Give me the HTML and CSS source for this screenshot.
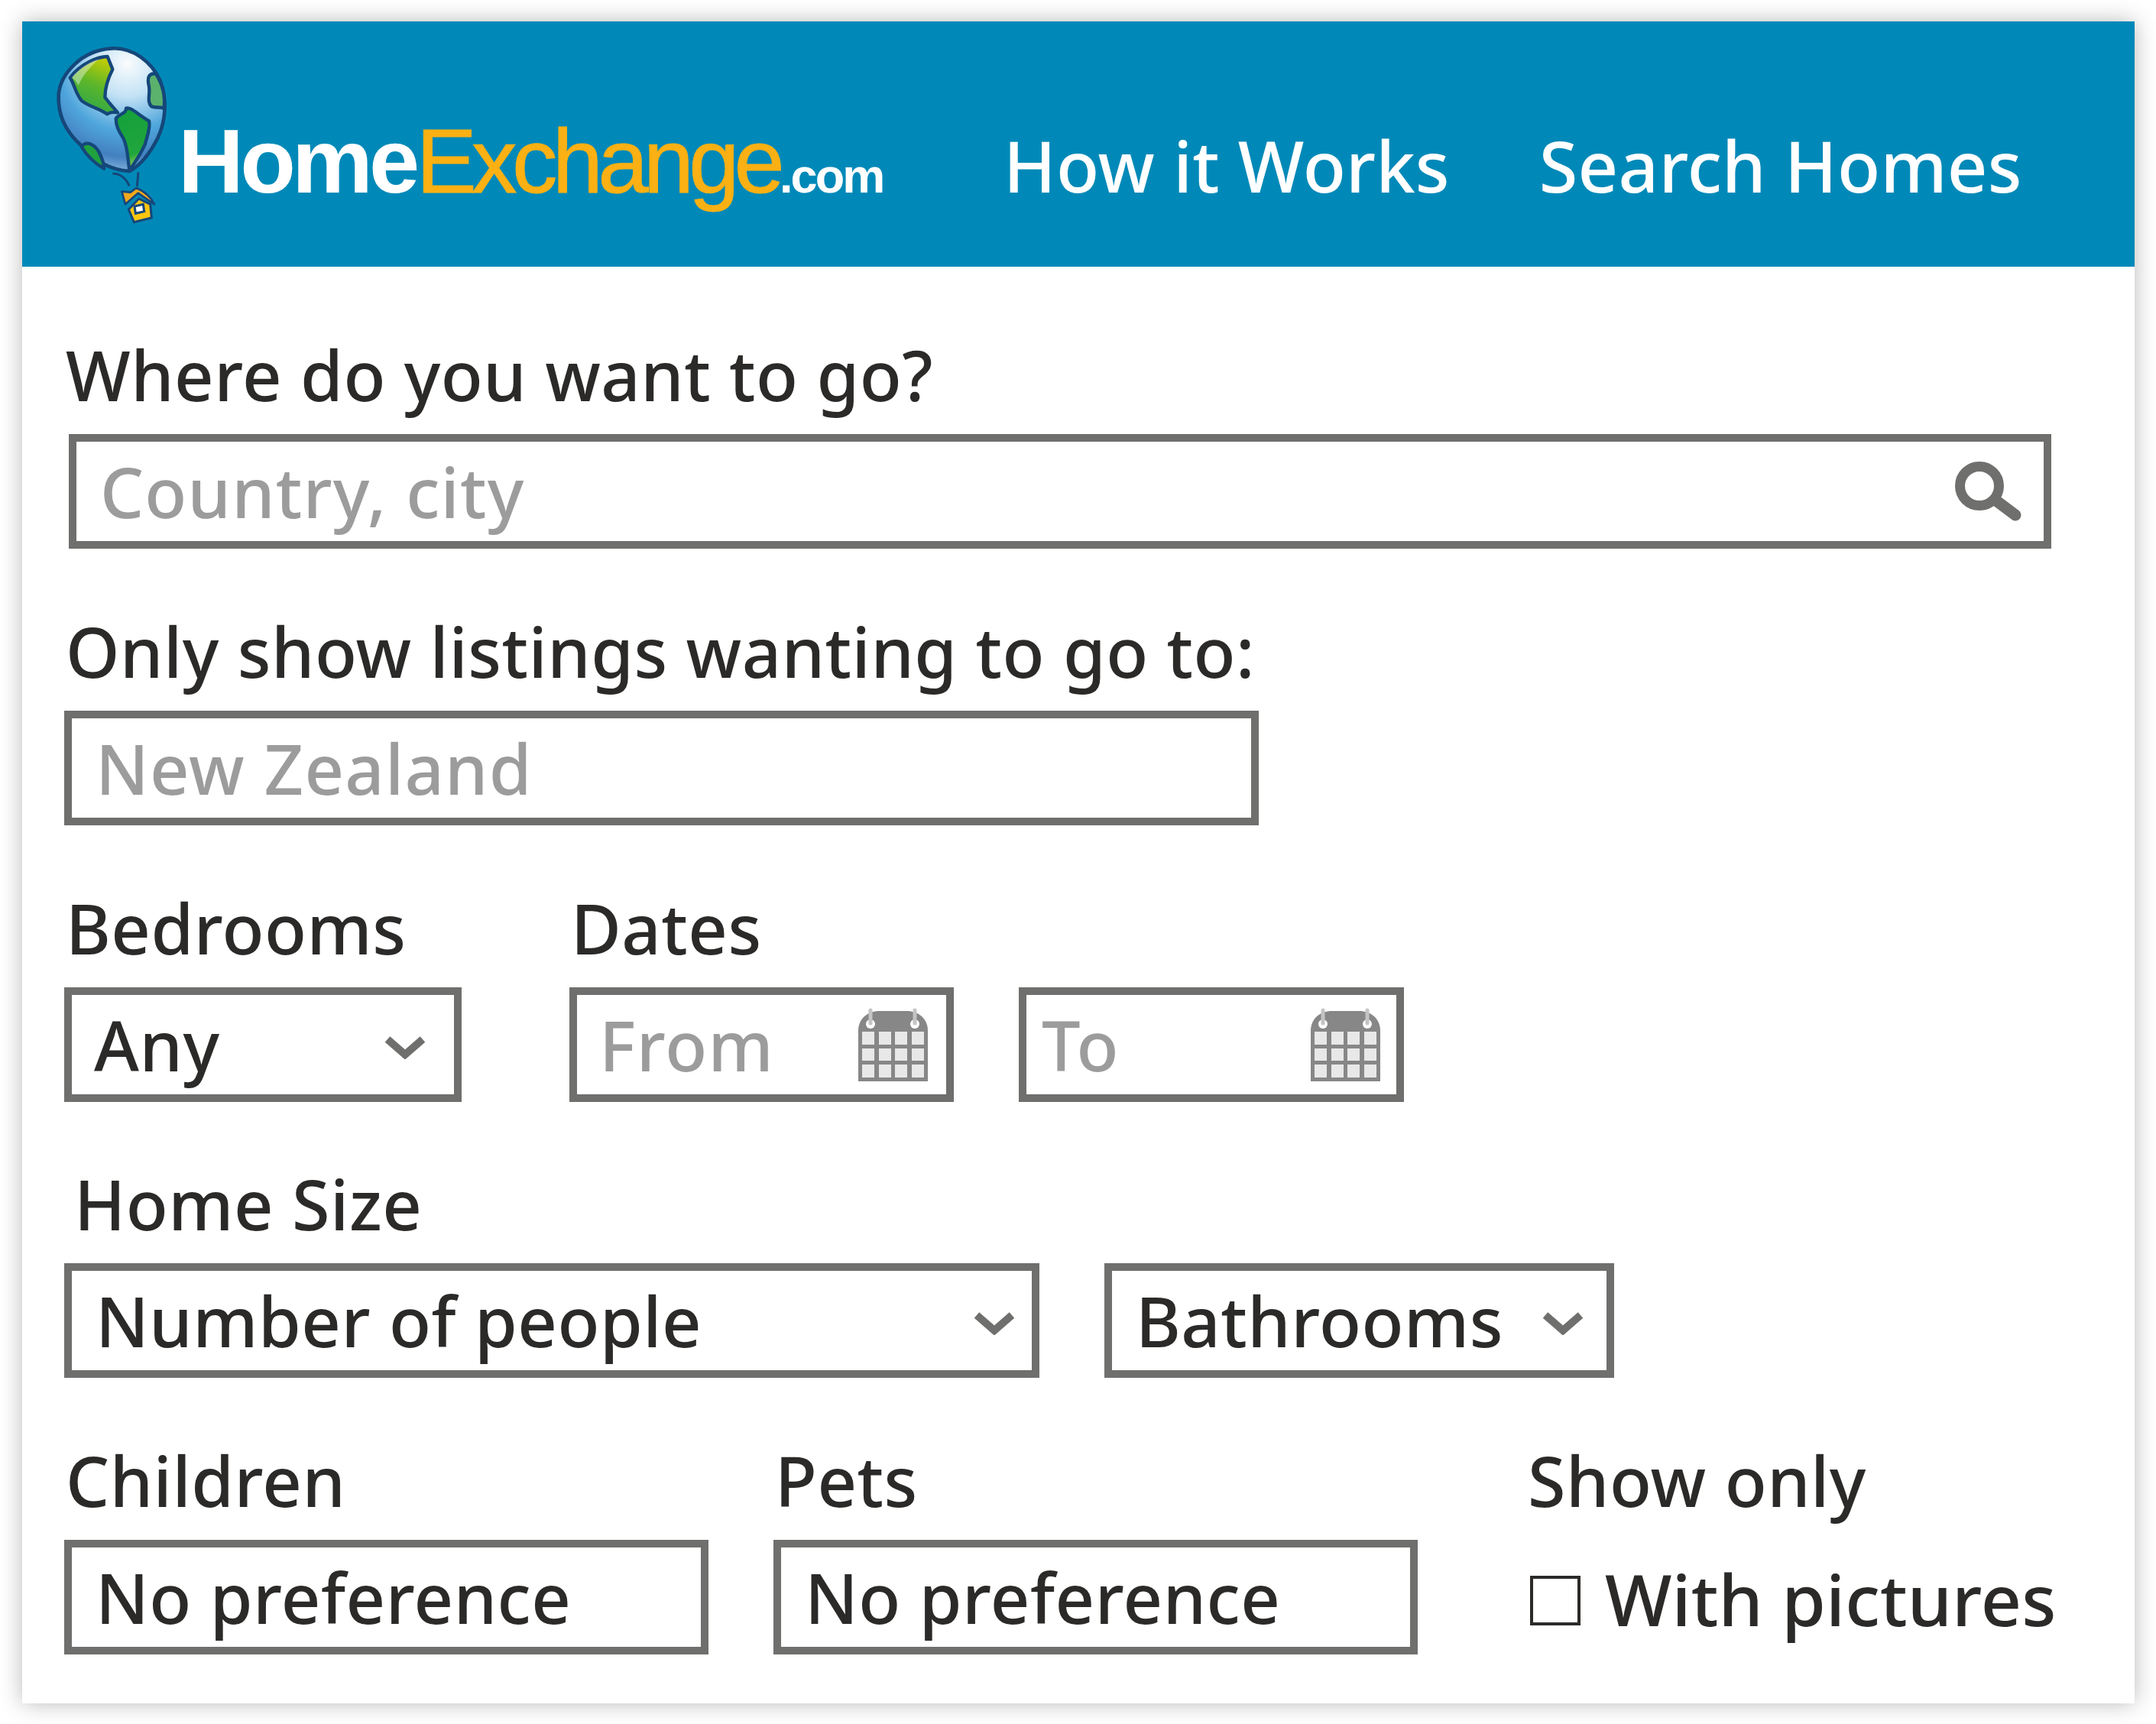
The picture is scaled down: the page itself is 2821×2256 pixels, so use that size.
FILE: index.html
```html
<!DOCTYPE html>
<html lang="en">
<head>
<meta charset="UTF-8" />
<title>HomeExchange search</title>
<link rel="stylesheet" href="styles.css">
</head>
<body>

<div class="card">
  <header class="top-bar">
    <a class="logo">
      <svg class="balloon" viewBox="0 0 600 810">
        <defs>
          <radialGradient id="sky" gradientUnits="userSpaceOnUse" cx="350" cy="130" r="430">
            <stop offset="0" stop-color="#fafcfd" />
            <stop offset="0.3" stop-color="#c3e2f5" />
            <stop offset="0.62" stop-color="#4fa6dc" />
            <stop offset="0.85" stop-color="#4380c0" />
            <stop offset="1" stop-color="#86b4dc" />
          </radialGradient>
          <linearGradient id="landTop" x1="0.75" y1="0" x2="0.4" y2="1">
            <stop offset="0" stop-color="#cdd000" />
            <stop offset="0.5" stop-color="#5db62a" />
            <stop offset="1" stop-color="#2aa64a" />
          </linearGradient>
          <linearGradient id="landLow" x1="0.3" y1="0" x2="0.5" y2="1">
            <stop offset="0" stop-color="#14a03c" />
            <stop offset="0.75" stop-color="#20a63c" />
            <stop offset="1" stop-color="#a8d060" />
          </linearGradient>
        </defs>
        <path class="globe" d="M290 70C375 66 445 125 478 195C508 270 500 355 470 420C440 480 400 530 358 552C305 548 235 530 170 452C110 400 76 330 80 250C88 170 170 76 290 70Z" />
        <path class="land" fill="url(#landTop)" d="M272 102C235 102 165 130 125 185C142 210 145 245 170 275C200 300 240 305 270 328C285 318 300 320 312 322L280 285L262 262C262 225 270 195 292 152Z" />
        <path class="glare" d="M240 112C200 122 160 150 132 184C145 195 152 205 158 215C175 175 205 140 240 112Z" />
        <path class="land" fill="url(#landLow)" d="M305 345C320 325 345 328 345 305C365 300 385 325 435 355C442 385 425 420 420 445C400 490 375 525 358 548C352 510 352 460 335 425C325 405 305 385 305 345Z" />
        <path class="land" fill="#5bb26c" d="M462 170C430 165 428 190 435 220C440 250 425 280 445 298C465 305 480 298 493 306C500 260 490 215 462 170Z" />
        <path class="land" fill="#1fa23e" d="M170 456C190 428 225 450 240 480C250 500 258 525 258 542C220 520 190 490 170 456Z" />
        <path class="cord" d="M292 562C320 560 345 580 358 610M393 556L388 612" />
        <path class="house-body" d="M355 702L395 660L440 682L445 735L376 752Z" />
        <path class="house-roof" d="M328 632L342 682L392 638L456 682C440 650 415 630 385 618L362 635Z" />
        <path class="house-window" d="M378 690L412 682L416 710L382 718Z" />
      </svg>
      <span class="wordmark"><b class="word-home">Home</b><span class="word-exchange">Exchange</span><b class="word-com">.com</b></span>
    </a>
    <nav class="main-nav">
      <a>How it Works</a>
      <a>Search Homes</a>
    </nav>
  </header>

  <form class="search-form">
    <div class="form-row search-row">
      <div class="field field-wide">
        <label>Where do you want to go?</label>
        <div class="box box-search">
          <span class="hint">Country, city</span>
          <svg class="search-icon" viewBox="0 0 87 78">
            <circle cx="32" cy="32" r="25.5" />
            <path d="M55 52L79 70" />
          </svg>
        </div>
      </div>
    </div>

    <div class="form-row">
      <div class="field w-listing">
        <label>Only show listings wanting to go to:</label>
        <div class="box"><span class="hint">New Zealand</span></div>
      </div>
    </div>

    <div class="form-row">
      <div class="field w-bedrooms">
        <label>Bedrooms</label>
        <div class="box box-any">
          <span>Any</span>
          <svg class="chevron" viewBox="0 0 54 30"><path d="M4 4L27 24L50 4" /></svg>
        </div>
      </div>
      <div class="field w-from">
        <label>Dates</label>
        <div class="box box-from">
          <span class="hint">From</span>
          <svg class="cal" viewBox="0 0 91 96">
            <path class="cal-body" d="M0 96V30C0 14 12 4 28 4H63C79 4 91 14 91 30V96Z" />
            <circle class="cal-hole" cx="16" cy="21" r="6" />
            <circle class="cal-hole" cx="74" cy="21" r="6" />
            <path class="cal-ring" d="M16 3V20M74 3V20" />
            <g class="cal-days">
              <rect x="5" y="31" width="16" height="17" /><rect x="27" y="31" width="16" height="17" /><rect x="48" y="31" width="16" height="17" /><rect x="70" y="31" width="16" height="17" />
              <rect x="5" y="53" width="16" height="16" /><rect x="27" y="53" width="16" height="16" /><rect x="48" y="53" width="16" height="16" /><rect x="70" y="53" width="16" height="16" />
              <rect x="5" y="74" width="16" height="17" /><rect x="27" y="74" width="16" height="17" /><rect x="48" y="74" width="16" height="17" /><rect x="70" y="74" width="16" height="17" />
            </g>
          </svg>
        </div>
      </div>
      <div class="field w-to">
        <label class="no-label">&nbsp;</label>
        <div class="box box-to">
          <span class="hint">To</span>
          <svg class="cal" viewBox="0 0 91 96">
            <path class="cal-body" d="M0 96V30C0 14 12 4 28 4H63C79 4 91 14 91 30V96Z" />
            <circle class="cal-hole" cx="16" cy="21" r="6" />
            <circle class="cal-hole" cx="74" cy="21" r="6" />
            <path class="cal-ring" d="M16 3V20M74 3V20" />
            <g class="cal-days">
              <rect x="5" y="31" width="16" height="17" /><rect x="27" y="31" width="16" height="17" /><rect x="48" y="31" width="16" height="17" /><rect x="70" y="31" width="16" height="17" />
              <rect x="5" y="53" width="16" height="16" /><rect x="27" y="53" width="16" height="16" /><rect x="48" y="53" width="16" height="16" /><rect x="70" y="53" width="16" height="16" />
              <rect x="5" y="74" width="16" height="17" /><rect x="27" y="74" width="16" height="17" /><rect x="48" y="74" width="16" height="17" /><rect x="70" y="74" width="16" height="17" />
            </g>
          </svg>
        </div>
      </div>
    </div>

    <div class="form-row">
      <div class="field w-people">
        <label class="label-indent">Home Size</label>
        <div class="box box-people">
          <span>Number of people</span>
          <svg class="chevron" viewBox="0 0 54 30"><path d="M4 4L27 24L50 4" /></svg>
        </div>
      </div>
      <div class="field w-baths">
        <label class="no-label">&nbsp;</label>
        <div class="box">
          <span>Bathrooms</span>
          <svg class="chevron" viewBox="0 0 54 30"><path d="M4 4L27 24L50 4" /></svg>
        </div>
      </div>
    </div>

    <div class="form-row">
      <div class="field w-pref">
        <label>Children</label>
        <div class="box"><span>No preference</span></div>
      </div>
      <div class="field w-pref">
        <label>Pets</label>
        <div class="box"><span>No preference</span></div>
      </div>
      <div class="field w-show">
        <label>Show only</label>
        <div class="check-line">
          <span class="check"></span>
          <span>With pictures</span>
        </div>
      </div>
    </div>
  </form>
</div>

</body>
</html>
```

FILE: styles.css
```css
* { box-sizing: border-box; }
body { margin: 0; padding: 28px 0 27px 29px; background: #fff; font-family: "Noto Sans", sans-serif; font-weight: 500; color: #2b2a28; }

.card {
  width: 2764px; height: 2201px; background: #fff;
  box-shadow: 0 0 28px rgba(0,0,0,0.28);
}

/* Header */
.top-bar { display: flex; height: 321px; background: #0089b8; }
.logo { display: flex; width: 1284px; padding: 12px 0 0 21px; }
.balloon { width: 200px; height: 270px; flex: none; }
.globe { fill: url(#sky); stroke: #15477a; stroke-width: 14; }
.land { stroke: #15477a; stroke-width: 13; stroke-linejoin: round; }
.glare { fill: #fff; opacity: 0.4; }
.cord { fill: none; stroke: #15477a; stroke-width: 9; }
.house-body { fill: #fcc60f; stroke: #15477a; stroke-width: 9; }
.house-roof { fill: #f2a81d; stroke: #15477a; stroke-width: 8; stroke-linejoin: round; }
.house-window { fill: #fff; stroke: #15477a; stroke-width: 9; }

.wordmark {
  margin: 102px 0 0 -17px; font-family: "Liberation Sans", Arial, sans-serif; font-size: 119px;
  font-weight: 400; line-height: 137px; white-space: nowrap;
}
.word-home { color: #fff; letter-spacing: -4.8px; }
.word-exchange { color: #fbb013; letter-spacing: -6.7px; -webkit-text-stroke: 1px #fbb013; }
.word-com { color: #fff; font-size: 63px; letter-spacing: -3px; }

.main-nav { display: flex; gap: 117px; padding-top: 40px; }
.main-nav a { margin-top: 81px; color: #fff; font-size: 92px; line-height: 136px; letter-spacing: 0.2px; white-space: nowrap; }

/* Form */
.search-form { display: flex; flex-direction: column; gap: 85.75px; padding: 93px 0 0 55px; letter-spacing: 0.5px; }
.form-row { display: flex; }
.search-row { padding-left: 6px; }
.field label { display: block; height: 100px; margin: 0 0 26px 2px; font-size: 90px; line-height: 96px; white-space: nowrap; }
.field .label-indent { margin-left: 13px; }
.search-row .field label { margin-left: -4px; }

.box {
  display: flex; align-items: center; justify-content: space-between; height: 150px;
  padding: 0 30px 0 31px; border: 10px solid #6f6f6d; background: #fff;
  font-size: 90px; white-space: nowrap;
}
.hint { color: #9c9c9c; letter-spacing: 1.2px; }

.field-wide { width: 2594px; }
.w-listing { width: 1563px; }
.w-bedrooms { width: 520px; margin-right: 141px; }
.w-from { width: 503px; margin-right: 85px; }
.w-to { width: 504px; }
.w-people { width: 1276px; margin-right: 85px; }
.w-baths { width: 667px; }
.w-pref { width: 843px; margin-right: 85px; }
.w-show { width: 720px; margin-left: 59px; }
.w-show label { margin-left: 0; }

.box-any { padding: 0 37px 0 29px; }
.box-search { padding-right: 29px; }
.box-from { padding: 0 24px 0 29px; }
.box-to { padding: 0 21px 0 20px; }
.box-people { padding-right: 22px; }

.chevron { width: 54px; height: 30px; flex: none; margin-top: 8px; }
.chevron path { fill: none; stroke: #6f6f6d; stroke-width: 10; }

.search-icon { width: 87px; height: 78px; flex: none; }
.search-icon circle { fill: none; stroke: #6f6f6d; stroke-width: 13; }
.search-icon path { fill: none; stroke: #6f6f6d; stroke-width: 15; stroke-linecap: round; }

.cal { width: 91px; height: 96px; flex: none; }
.cal-body { fill: #878787; }
.cal-hole { fill: #fff; }
.cal-ring { fill: none; stroke: #c4c4c4; stroke-width: 5; stroke-linecap: round; }
.cal-days { fill: #e8e8e8; }

.check-line { display: flex; align-items: center; gap: 32px; height: 150px; margin-left: 3px; padding-top: 4px; font-size: 93px; letter-spacing: 0.1px; white-space: nowrap; }
.check { width: 66px; height: 65px; flex: none; margin-top: 4px; border: 4px solid #2b2a28; }
```
